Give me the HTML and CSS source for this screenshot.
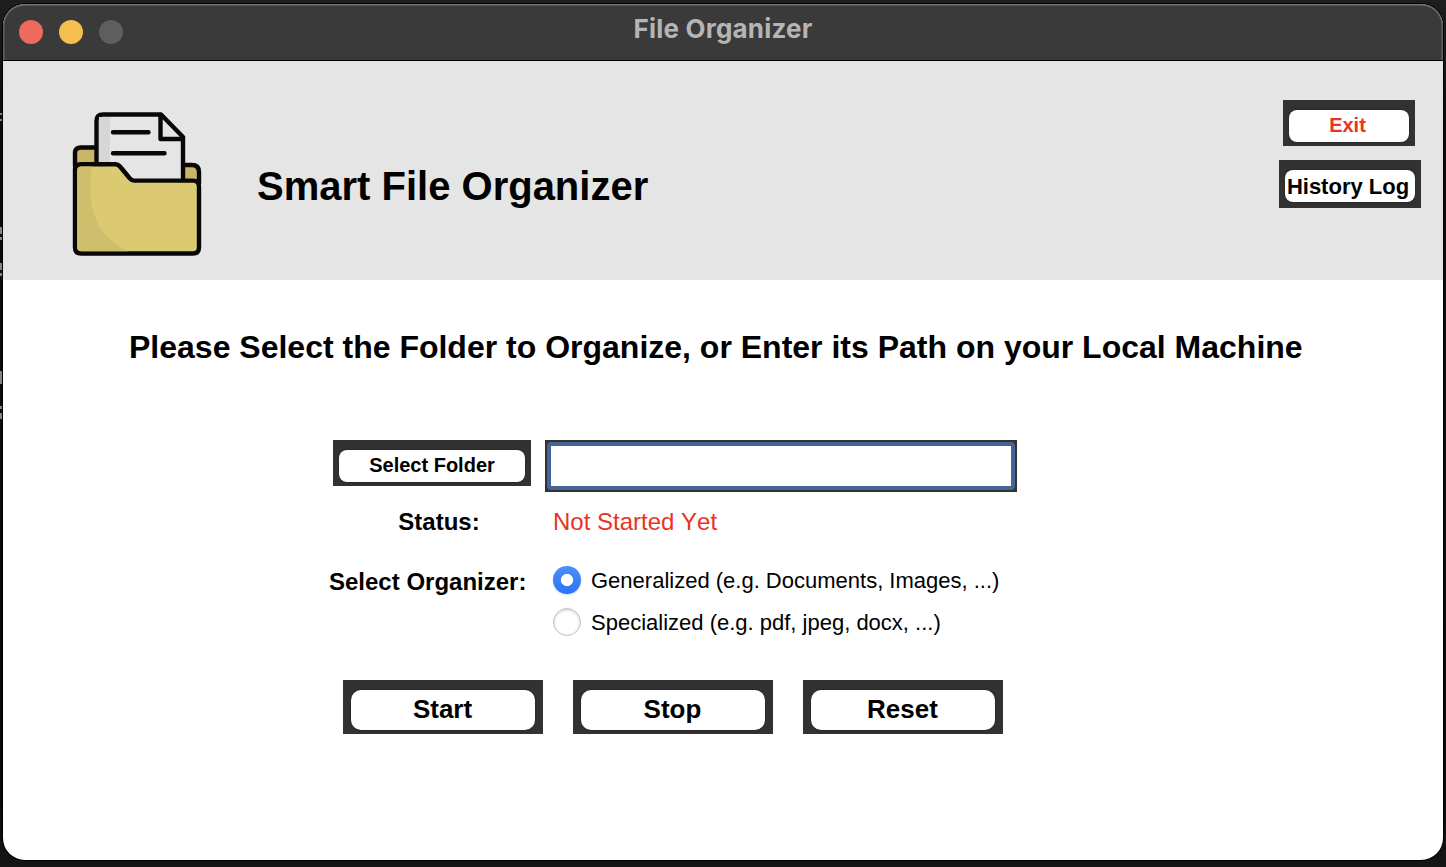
FILE: index.html
```
<!DOCTYPE html>
<html lang="en">
<head>
<meta charset="utf-8">
<title>File Organizer</title>
<link rel="stylesheet" href="styles.css">
</head>
<body>
<svg class="backdrop" width="2" height="867" viewBox="0 0 2 867" fill="#858585" aria-hidden="true">
  <path d="M0 113h2v2H0zM0 119h2v2H0zM0 227h2v7H0zM0 237h2v3H0zM0 263h2v7H0zM0 273h2v3H0zM0 371h2v13H0zM0 406h2v3H0zM0 413h2v6H0z"/>
</svg>
<main class="window">
  <div class="titlebar">
    <div class="lights"><span class="light close"></span><span class="light minimize"></span><span class="light zoom"></span></div>
    <div class="window-title">File Organizer</div>
  </div>
  <header class="header">
    <svg class="logo" width="132" height="148" viewBox="71 110 132 148" fill="none" stroke="#080808" stroke-width="4.4" stroke-linejoin="round" stroke-linecap="round">
      <path d="M75 166V153Q75 147.500 81 147.500H100V166Z" fill="#c8b566"/>
      <path d="M180 165H192Q199 165 199 172V184H180Z" fill="#c8b566"/>
      <path d="M96.500 164V121Q96.500 114.500 103 114.500H161L183 137V182H130Z" fill="#e5e5e5"/>
      <path d="M99 117H110V162H99Z" fill="#d6d6d6" stroke="none"/>
      <path d="M160.500 115V139H182.500"/>
      <path d="M113 132.200H148.500M113 153.200H164.500"/>
      <path d="M75 170Q75 164.200 81 164.200H115.500Q118 164.200 120 166.500L129.500 178Q131.500 180.600 134.500 180.600H193Q199 180.600 199 187V247.500Q199 253.500 193 253.500H81Q75 253.500 75 247.500Z" fill="#dcca73"/>
      <path d="M77.200 171Q77.200 166.400 82 166.400H92Q90.500 172 90.500 190C90.500 221 105 240 128 251.300H82Q77.200 251.300 77.200 247Z" fill="#cfbe6b" stroke="none"/>
    </svg>
    <h1 class="app-name">Smart File Organizer</h1>
    <div class="header-actions">
      <button class="btn exit"><span class="face">Exit</span></button>
      <button class="btn history"><span class="face">History Log</span></button>
    </div>
  </header>
  <h2 class="prompt">Please Select the Folder to Organize, or Enter its Path on your Local Machine</h2>
  <div class="path-row">
    <button class="btn select"><span class="face">Select Folder</span></button>
    <div class="field"><input class="path" type="text" aria-label="Folder path"></div>
  </div>
  <div class="status-row">
    <span class="label">Status:</span>
    <span class="status">Not Started Yet</span>
  </div>
  <div class="organizer-row">
    <span class="label">Select Organizer:</span>
    <div class="options">
      <div class="option"><span class="radio checked"></span><span class="option-text">Generalized (e.g. Documents, Images, ...)</span></div>
      <div class="option"><span class="radio"></span><span class="option-text">Specialized (e.g. pdf, jpeg, docx, ...)</span></div>
    </div>
  </div>
  <div class="controls">
    <button class="btn action"><span class="face">Start</span></button>
    <button class="btn action"><span class="face">Stop</span></button>
    <button class="btn action"><span class="face">Reset</span></button>
  </div>
</main>
</body>
</html>
```
FILE: styles.css
```
* { box-sizing: border-box; }
body {
  margin: 0;
  height: 867px;
  padding: 4px 3px 7px;
  overflow: hidden;
  background: linear-gradient(#1e1e1e 0, #0c0c0c 120px, #0a0a0a 800px, #151515 867px);
  font-family: "Liberation Sans", Arial, sans-serif;
  color: #000;
}
.backdrop { position: absolute; left: 0; top: 0; }
.window {
  position: relative;
  height: 856px;
  border-radius: 22px;
  background: #fff;
  overflow: hidden;
  box-shadow: 0 0 0 1px #000;
}
.titlebar {
  display: grid;
  grid-template-columns: 1fr auto 1fr;
  height: 57px;
  background: #3a3a3a;
  border-bottom: 1px solid #000;
  border-radius: 22px 22px 0 0;
  box-shadow: inset 0 2px 0 -0.5px #727272, inset 1.5px 0 0 #626262, inset -1.5px 0 0 #626262;
}
.lights { display: flex; gap: 16px; padding: 16px 0 0 16px; }
.light { width: 24px; height: 24px; border-radius: 50%; }
.close { background: #ed6a5e; }
.minimize { background: #f5bf4f; }
.zoom { background: #5e5e5e; }
.window-title { font: 700 26px/32px Inter, sans-serif; letter-spacing: 0.2px; color: #b5b5b5; padding-top: 9px; }
.header { display: flex; height: 219px; background: #e5e5e5; }
.logo { margin: 49px 0 0 68px; flex: none; }
.app-name { margin: 102px 0 0 54px; font-size: 40px; line-height: 46px; white-space: nowrap; }
.header-actions { margin: 39px 22px 0 auto; display: flex; flex-direction: column; align-items: center; gap: 14px; }
.btn {
  display: flex;
  flex: none;
  border: 0;
  padding: 10px 6px 4px;
  background: #323232;
  font-family: inherit;
  font-weight: 700;
  color: #000;
}
.face {
  flex: 1;
  height: 100%;
  display: flex;
  align-items: center;
  justify-content: center;
  border-radius: 8px;
  background: #fff;
  box-shadow: 0 0 2px #1c1c1c;
  white-space: nowrap;
}
.exit { width: 132px; height: 46px; margin-right: 2px; font-size: 20px; color: #ea3323; }
.exit .face { padding: 0 3px 2px 0; }
.history { width: 142px; height: 48px; padding-bottom: 6px; font-size: 22px; }
.history .face { padding: 2px 4px 0 0; }
.prompt { margin: 48px 0 0 126px; font-size: 32px; line-height: 38px; white-space: nowrap; }
.path-row { display: flex; align-items: flex-start; gap: 14px; margin: 74px 0 0 330px; }
.select { width: 198px; height: 46px; font-size: 20px; }
.select .face { padding-bottom: 2px; }
.field { width: 472px; height: 52px; padding: 2px; background: #323232; }
.path { display: block; width: 100%; height: 48px; border: 4px solid #456597; border-radius: 4px; padding: 0 4px; outline: 0; background: #fff; font: 22px "Liberation Sans", Arial, sans-serif; }
.status-row, .organizer-row { display: grid; grid-template-columns: 220px 1fr; margin-left: 326px; }
.label { font-size: 24px; line-height: 28px; font-weight: 700; justify-self: center; }
.status-row { margin-top: 16px; }
.status { padding-left: 4px; font-size: 24px; line-height: 28px; font-kerning: none; color: #ea3323; }
.organizer-row { margin-top: 30px; }
.organizer-row .label { padding-top: 2px; justify-self: start; }
.options { display: flex; flex-direction: column; gap: 14px; padding-left: 4px; }
.option { display: flex; align-items: center; gap: 10px; height: 28px; font-size: 22px; line-height: 28px; }
.option-text { padding-top: 2px; }
.radio { width: 28px; height: 28px; border-radius: 50%; background: #fff; border: 1px solid #c2c2c2; box-shadow: inset 0 1px 3px #ccc; }
.radio.checked { border: 0; background: radial-gradient(circle, #fff 5.7px, transparent 6.4px), linear-gradient(#4a91f8, #2d72f5); box-shadow: 0 1px 2px #2d72f540; }
.controls { display: flex; gap: 30px; margin: 44px 0 0 340px; }
.action { width: 200px; height: 54px; padding: 10px 8px 4px; font-size: 26px; }
.action .face { border-radius: 10px; padding: 0 1px 1px 0; }
```
